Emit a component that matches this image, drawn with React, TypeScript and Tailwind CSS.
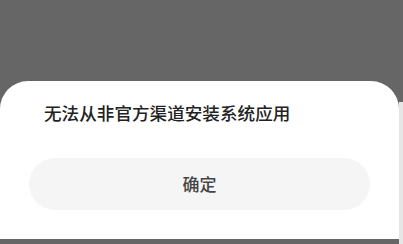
export default function App() {
  return (
    <div
      className="flex h-[244px] w-[403px] bg-[#666666]"
      style={{ fontFamily: '"Noto Sans CJK SC", "Noto Sans", sans-serif' }}
    >
      <div className="flex w-[399px] flex-col">
        <div className="h-[81px] shrink-0" />
        <div className="flex flex-1 flex-col rounded-t-[28px] bg-white px-[29px] pt-[20px]">
          <div className="pl-[15px] text-[17.6px] font-medium leading-[24px] text-[#222222]">
            无法从非官方渠道安装系统应用
          </div>
          <button className="mt-[33px] flex h-[52px] items-center justify-center rounded-full bg-[#f5f5f5] text-[17px] font-medium text-[#444444]">
            确定
          </button>
        </div>
        <div className="h-[5px] shrink-0 bg-[#666666]" />
      </div>
      <div className="flex w-[4px] flex-col">
        <div className="h-[102px] shrink-0 bg-[#666666]" />
        <div className="flex-1 bg-[#e6e6e6]" />
      </div>
    </div>
  );
}
